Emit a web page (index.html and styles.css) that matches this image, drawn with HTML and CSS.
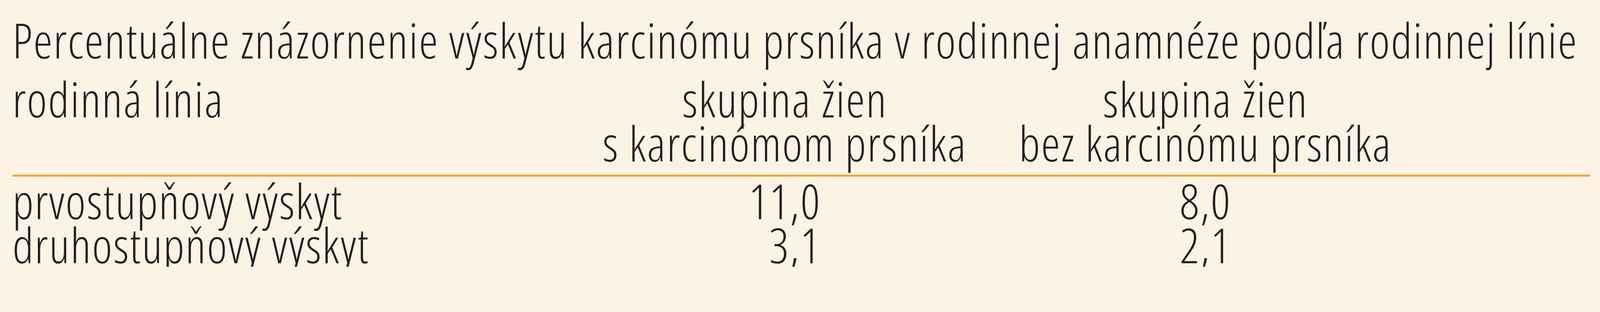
FILE: index.html
```html
<!DOCTYPE html>
<html lang="sk">
<head>
<meta charset="utf-8">
<title>Percentuálne znázornenie výskytu karcinómu prsníka</title>
<link rel="stylesheet" href="styles.css">
</head>
<body>
<div class="table">
  <div class="caption">Percentuálne znázornenie výskytu karcinómu prsníka v rodinnej anamnéze podľa rodinnej línie</div>
  <div class="head">
    <div class="label">rodinná línia</div>
    <div class="col">skupina žien<br>s karcinómom prsníka</div>
    <div class="col">skupina žien<br>bez karcinómu prsníka</div>
  </div>
  <div class="rule"></div>
  <div class="body">
    <div class="label">prvostupňový výskyt</div>
    <div class="col"><span class="dec">11,0</span></div>
    <div class="col">8,0</div>
    <div class="label">druhostupňový výskyt</div>
    <div class="col"><span class="dec">3,1</span></div>
    <div class="col">2,1</div>
  </div>
</div>
</body>
</html>
```
FILE: styles.css
```css
html, body {
  margin: 0;
  background: #fdf3e5;
}
body {
  padding: 46px 25px 0 32px;
}
.table {
  font-family: "Open Sans", "Liberation Sans", sans-serif;
  font-stretch: condensed;
  font-weight: 300;
  font-size: 123px;
  line-height: 113px;
  letter-spacing: 2.7px;
  color: #231f20;
  white-space: nowrap;
}
.head, .body {
  display: grid;
  grid-template-columns: 1448px 1058px 1096px 1fr;
}
.head {
  margin-top: 38px;
}
.label {
  grid-column: 1;
}
.col {
  text-align: center;
  font-variant-numeric: tabular-nums;
}
.rule {
  height: 5px;
  background: #eca72a;
  margin-top: 25px;
}
.body {
  margin-top: 5px;
}
.dec {
  display: inline-block;
  width: 1.5em;
  text-align: right;
}
```
